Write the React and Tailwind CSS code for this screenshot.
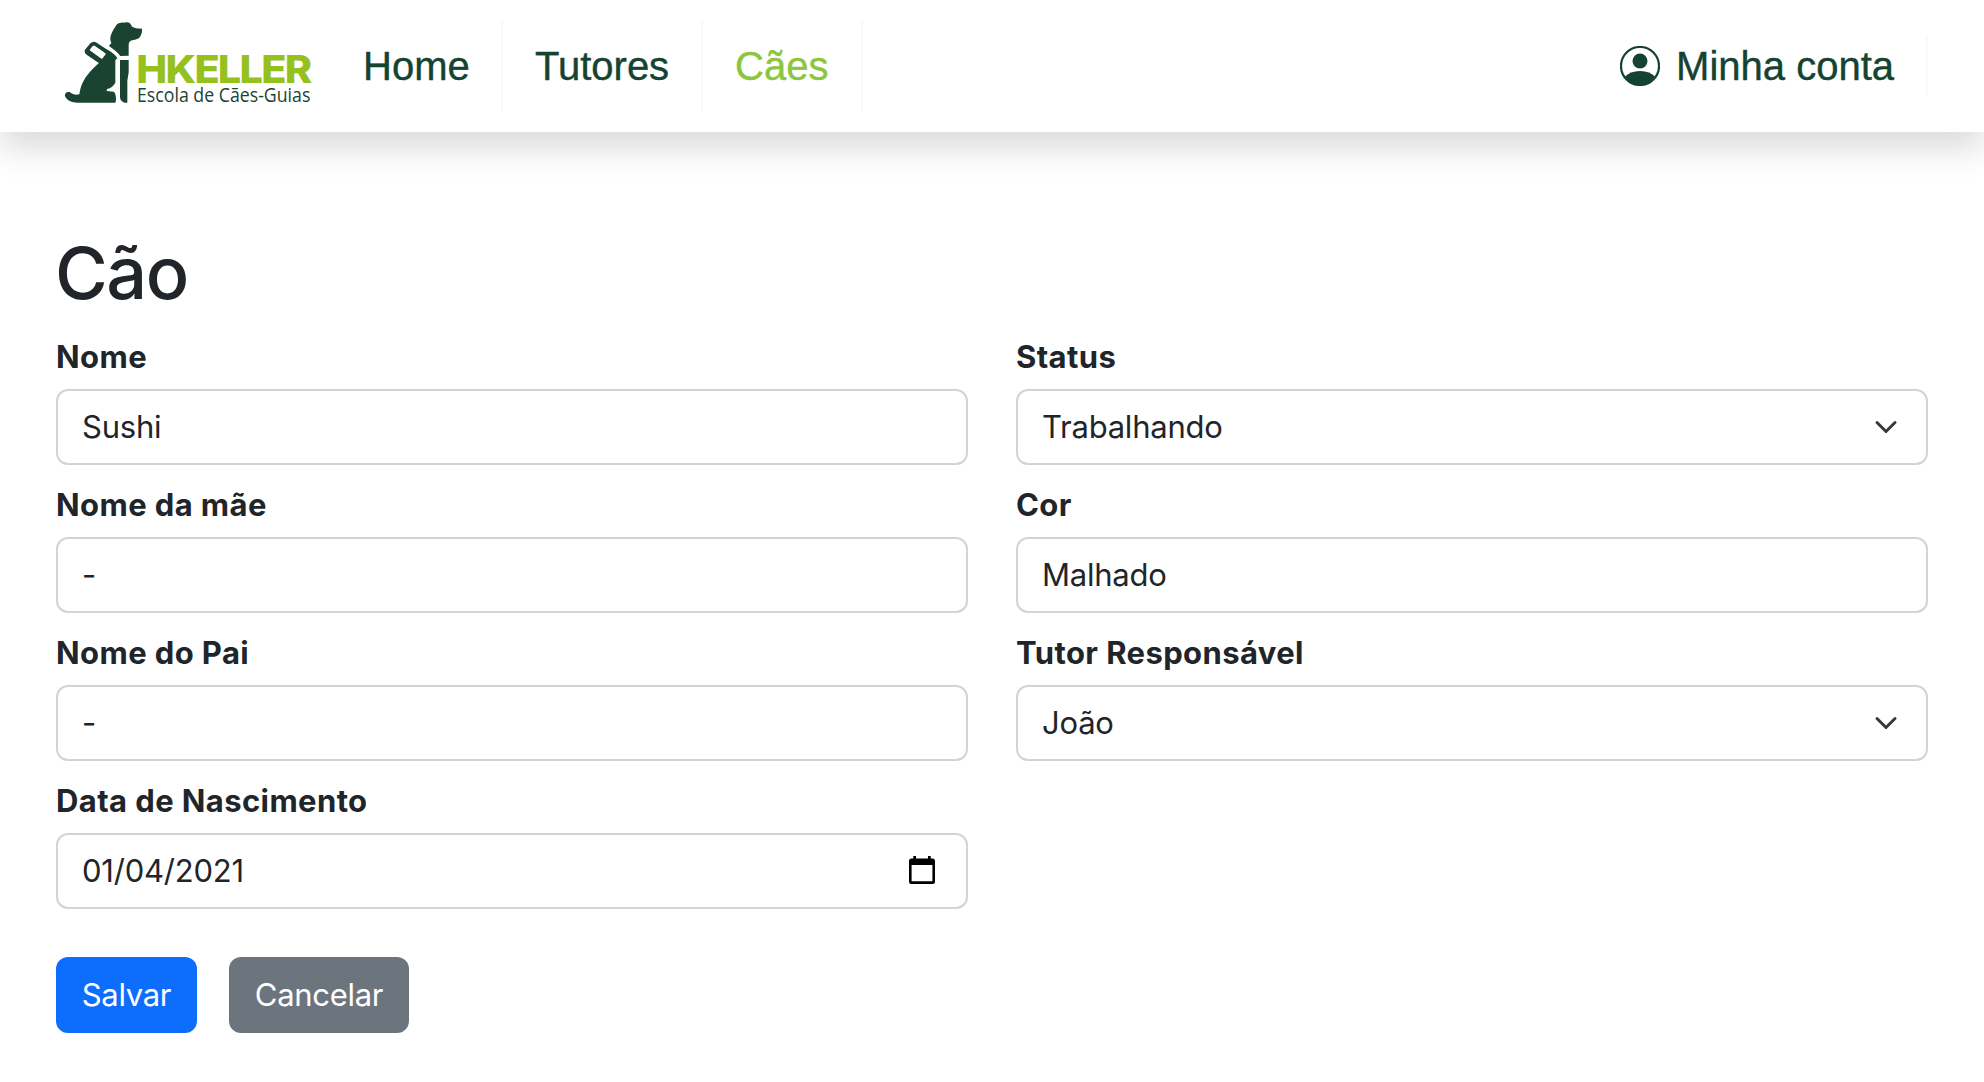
const fieldBox =
  'flex h-[76px] items-center justify-between rounded-[12px] border-2 border-[#ced4da] bg-white pr-[26px] pl-6 text-[31px] leading-[48px] tracking-[-0.23px]';

function Logo() {
  return (
    <svg className="ml-[50px] h-[110px] w-[280px] shrink-0 overflow-visible" viewBox="0 0 840 330" role="img" aria-label="HKELLER Escola de Cães-Guias">
      <g fill="#1b4332">
        <path d="M178 106 L184 100 L181 90 C180 76 188 62 196 50 C202 39 213 37 224 38 C234 35 242 38 246 50 L258 55 L276 56 C277 64 275 72 271 79 C267 88 256 89 247 91 C240 92 236 97 236 104 L236 137 L211 138 C203 127 190 118 178 109 Z" />
        <path d="M166 117 C183 124 197 135 202 145 L196 150 L196 218 C190 228 184 234 171 237 L170 243 L191 245 C198 250 200 268 196 278 L82 278 C66 278 51 272 45 259 C43 248 54 244 60 247 C68 254 78 256 88 253 C91 235 94 224 101 212 C116 187 133 172 146 160 Z" />
        <path d="M210 150 H236 V187 L232 212 V278 H224 Q211 275 210 262 Z" />
        <path fillRule="evenodd" d="M105 119 L121 100 Q130 92 140 98 L182 126 L154 164 L111 135 Q101 127 105 119 Z M119 120 L129 108 Q131 106 134 108 L168 131 L156 147 Z" />
      </g>
      <path d="M119 120 L129 108 Q131 106 134 108 L168 131 L156 147 Z" fill="#fff" />
      <text x="259" y="219" fontFamily="Inter, sans-serif" fontWeight="800" fontSize="116" letterSpacing="-5" textLength="522" lengthAdjust="spacingAndGlyphs" fill="#95c11f">HKELLER</text>
      <text x="261" y="277" fontFamily="'Open Sans', sans-serif" fontWeight="500" fontSize="60" textLength="520" lengthAdjust="spacingAndGlyphs" fill="#1b4332">Escola de Cães-Guias</text>
    </svg>
  );
}

function Chevron() {
  return (
    <svg className="mr-[2px] h-6 w-6" viewBox="0 0 16 16" fill="none" stroke="#343a40" strokeWidth="2" strokeLinecap="round" strokeLinejoin="round">
      <path d="m2 5 6 6 6-6" />
    </svg>
  );
}

function CalendarIcon() {
  return (
    <svg className="mr-[5px] mb-[2px] h-7 w-[26px]" viewBox="0 0 26 28">
      <path fillRule="evenodd" d="M4.300 0H7V2.500H19V0H21.700V2.500H23.500Q26 2.500 26 5V25.500Q26 28 23.500 28H2.500Q0 28 0 25.500V5Q0 2.500 2.500 2.500H4.300ZM2.600 9V25.200H23.400V9Z" />
    </svg>
  );
}

function Field({ label, value, icon }) {
  return (
    <div>
      <div className="mb-2 text-[31px] leading-[48px] font-bold tracking-[0.4px]">{label}</div>
      <div className={fieldBox}>
        <span>{value}</span>
        {icon}
      </div>
    </div>
  );
}

export default function App() {
  return (
    <div className="min-h-[1082px] bg-white font-['Inter',sans-serif] text-[#212529]">
      <header className="flex h-[132px] items-center bg-white font-['Liberation_Sans',Arial,sans-serif] text-[40px] text-[#144332] shadow-[0_16px_32px_rgba(0,0,0,0.15)] [-webkit-text-stroke:0.4px]">
        <div className="-mt-[2px] [-webkit-text-stroke:0]"><Logo /></div>
        <nav className="flex h-[92px] items-center">
          <a className="flex h-full w-[173px] items-center border-r-2 border-[#f8f9fa] pl-[33px]">Home</a>
          <a className="flex h-full w-[200px] items-center border-r-2 border-[#f8f9fa] pl-8">Tutores</a>
          <a className="flex h-full w-[160px] items-center border-r-2 border-[#f8f9fa] pl-8 text-[#8cc63f]">Cães</a>
        </nav>
        <a className="mr-14 ml-auto flex h-[60px] items-center gap-4 border-r-2 border-[#f8f9fa] pr-8">
          <svg className="h-10 w-10" viewBox="0 0 40 40">
            <circle cx="20" cy="20" r="19" fill="none" stroke="#144332" strokeWidth="2.200" />
            <circle cx="20" cy="15" r="7.500" fill="#144332" />
            <path d="M4.500 31Q10 25 20 25T35.500 31Q30 39.500 20 39.500T4.500 31Z" fill="#144332" />
          </svg>
          <span>Minha conta</span>
        </a>
      </header>
      <main className="px-14 pt-24">
        <h1 className="mb-4 -ml-[1px] text-[72px] leading-[89px] font-medium tracking-[-1.5px]">Cão</h1>
        <div className="grid grid-cols-2 gap-x-12 gap-y-4">
          <Field label="Nome" value="Sushi" />
          <Field label="Status" value="Trabalhando" icon={<Chevron />} />
          <Field label="Nome da mãe" value="-" />
          <Field label="Cor" value="Malhado" />
          <Field label="Nome do Pai" value="-" />
          <Field label="Tutor Responsável" value="João" icon={<Chevron />} />
          <Field label="Data de Nascimento" value="01/04/2021" icon={<CalendarIcon />} />
        </div>
        <div className="mt-12 flex gap-8 text-[31px] tracking-[-0.3px] text-white">
          <button className="h-[76px] w-[141px] rounded-[12px] bg-[#0d6efd]">Salvar</button>
          <button className="h-[76px] w-[180px] rounded-[12px] bg-[#6c757d]">Cancelar</button>
        </div>
      </main>
    </div>
  );
}
